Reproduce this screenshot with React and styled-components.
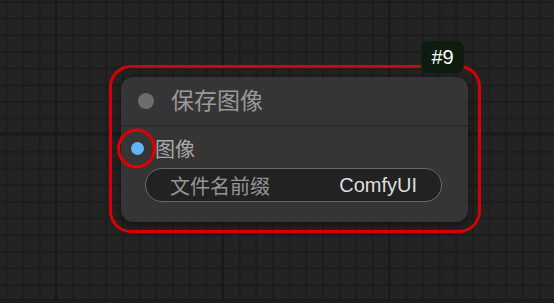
import React from "react";
import styled, { createGlobalStyle } from "styled-components";

const GlobalStyle = createGlobalStyle`
  html, body {
    margin: 0;
    padding: 0;
    background: #222222;
  }
  * {
    box-sizing: border-box;
  }
`;

const Canvas = styled.div`
  position: relative;
  width: 554px;
  height: 303px;
  overflow: hidden;
  font-family: "Liberation Sans", Arial, "Noto Sans CJK SC", sans-serif;
  background-color: #232323;
  background-image:
    linear-gradient(to right, #191919 2px, transparent 2px),
    linear-gradient(to bottom, #191919 2px, transparent 2px),
    linear-gradient(to right, #1c1c1c 1.5px, transparent 1.5px),
    linear-gradient(to bottom, #1c1c1c 1.5px, transparent 1.5px);
  background-size: 166.67px 166.67px, 166.67px 166.67px, 16.667px 16.667px, 16.667px 16.667px;
  background-position: 55px 0, 0 132px, 5.5px 0, 0 1px;
`;

const Node = styled.div`
  position: absolute;
  left: ${({ x }) => x}px;
  top: ${({ y }) => y}px;
  width: ${({ w }) => w}px;
  height: ${({ h }) => h}px;
  background: #353535;
  border-radius: 12px;
  box-shadow: 0 2px 8px rgba(0, 0, 0, 0.55);
  display: flex;
  flex-direction: column;
`;

const Selection = styled.div`
  position: absolute;
  top: -12px;
  left: -12px;
  right: -13px;
  bottom: -11px;
  border: 3px solid #d80000;
  border-radius: 22px;
  pointer-events: none;
`;

const Badge = styled.div`
  position: absolute;
  right: 4px;
  top: -36px;
  width: 43px;
  height: 32px;
  border-radius: 8px;
  background: #0e1c0f;
  color: #ffffff;
  font-size: 20px;
  display: flex;
  align-items: center;
  justify-content: center;
`;

const TitleBar = styled.div`
  height: 50px;
  display: flex;
  align-items: center;
  gap: 17px;
  padding-left: 17px;
  border-bottom: 2px solid #2c2c2c;
`;

const Dot = styled.span`
  position: relative;
  flex: none;
  width: ${({ size }) => size}px;
  height: ${({ size }) => size}px;
  border-radius: 50%;
  background: ${({ color }) => color};
`;

const Ring = styled.span`
  position: absolute;
  left: 50%;
  top: 50%;
  width: 39px;
  height: 40px;
  transform: translate(-50%, -50%) translate(-1.5px, -0.5px);
  border: 3px solid #e00000;
  border-radius: 50%;
`;

const Title = styled.span`
  color: #9a9a9a;
  font-size: 23px;
  line-height: 1;
`;

const Body = styled.div`
  display: flex;
  flex-direction: column;
  padding: 0 26px 20px 10px;
`;

const Slot = styled.div`
  height: 43px;
  display: flex;
  align-items: center;
  gap: 11px;
  color: #a8a8a8;
  font-size: 20px;
`;

const Widget = styled.div`
  margin: -2px 0 0 14px;
  height: 34px;
  display: flex;
  align-items: center;
  justify-content: space-between;
  padding: 0 24px 0 24px;
  background: #222222;
  border: 1.5px solid #686868;
  border-radius: 17px;
  font-size: 20px;
`;

const Label = styled.span`
  color: #959595;
`;

const Value = styled.span`
  color: #dedede;
`;

export default function App() {
  return (
    <>
      <GlobalStyle />
      <Canvas>
        <Node x={121} y={77} w={347} h={145}>
          <Selection />
          <Badge>#9</Badge>
          <TitleBar>
            <Dot size={16} color="#6d6d6d" />
            <Title>保存图像</Title>
          </TitleBar>
          <Body>
            <Slot>
              <Dot size={13} color="#64b4f6">
                <Ring />
              </Dot>
              <span>图像</span>
            </Slot>
            <Widget>
              <Label>文件名前缀</Label>
              <Value>ComfyUI</Value>
            </Widget>
          </Body>
        </Node>
      </Canvas>
    </>
  );
}
